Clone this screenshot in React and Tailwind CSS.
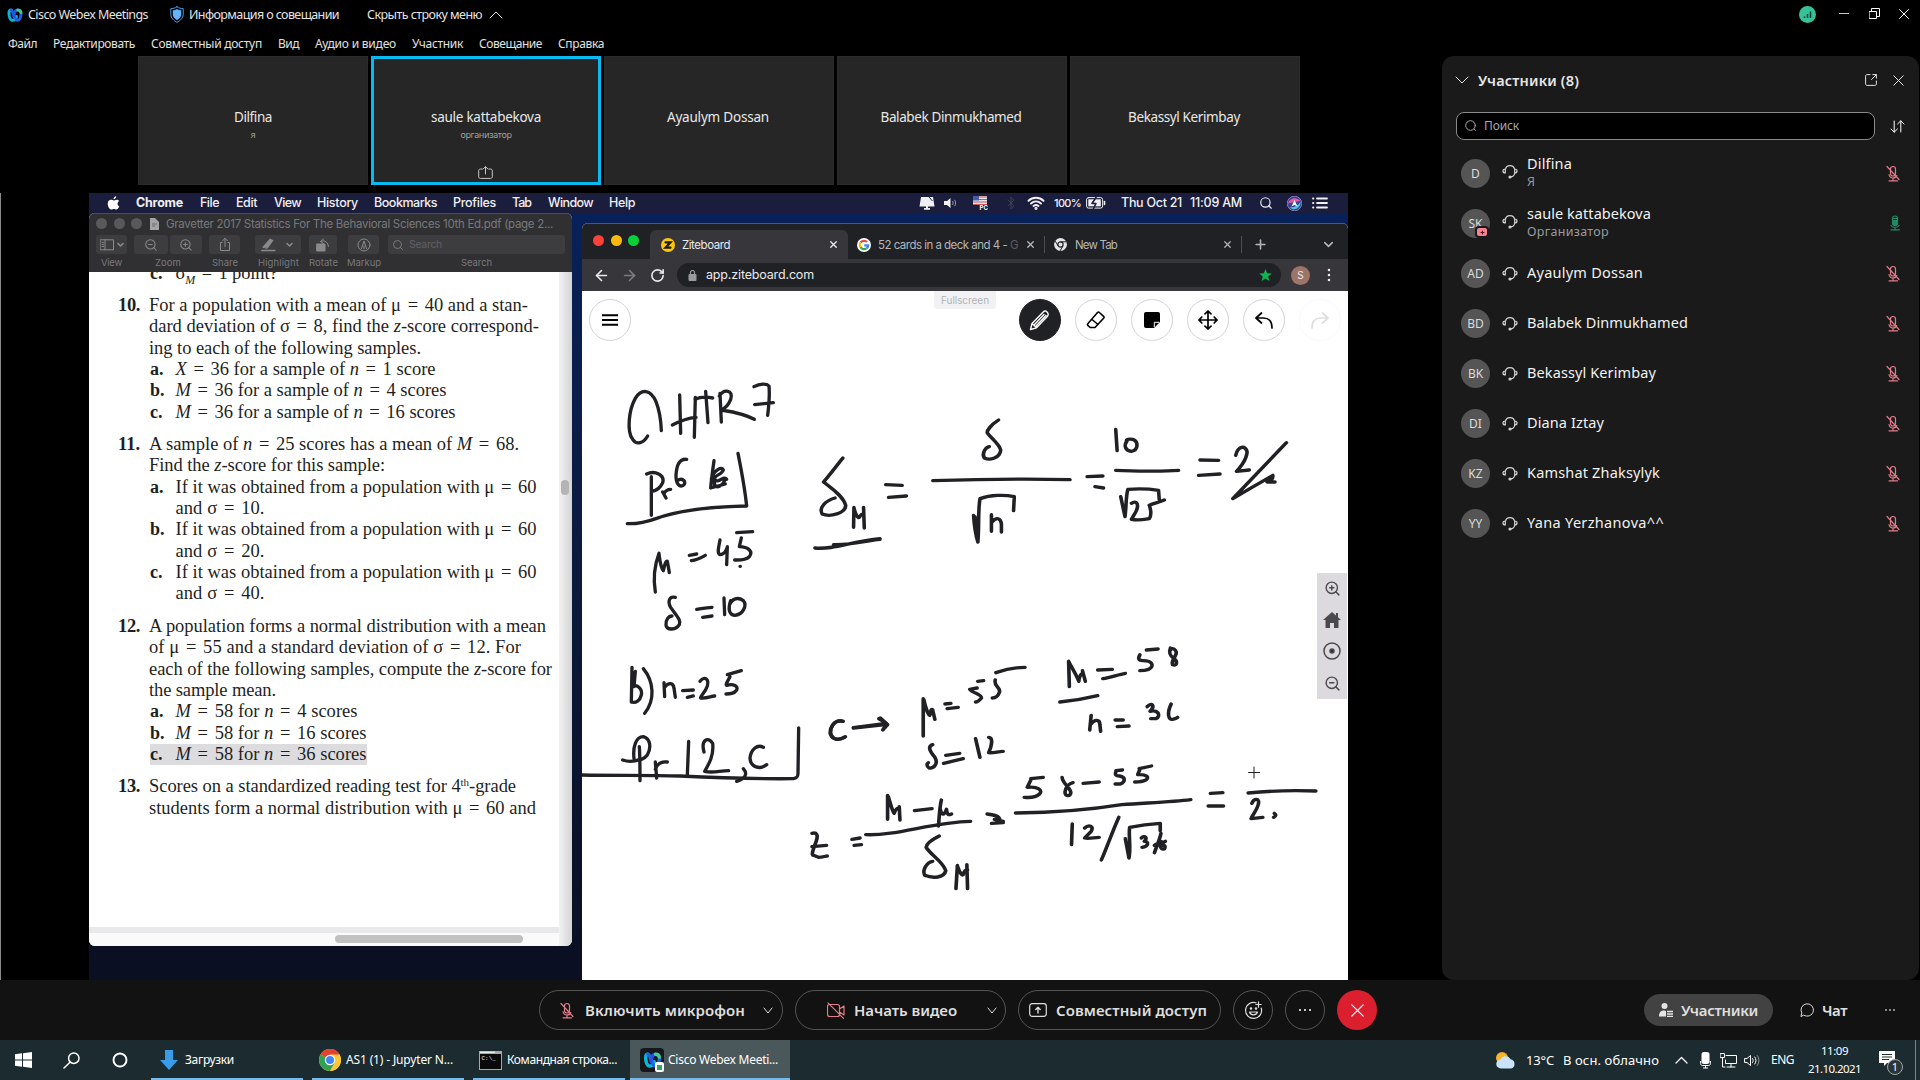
import React, { useLayoutEffect, useRef, useState } from "react";
import { ArrowLeft, ArrowRight, Bluetooth, ChevronDown, Plus, RotateCw, Search, X, ZoomIn, ZoomOut } from "lucide-react";

/* Text that spreads or tightens its letters to fill a given width. */
function T({ w, className = "", children }) {
  const ref = useRef(null);
  const [ls, setLs] = useState(0);
  useLayoutEffect(() => {
    const el = ref.current;
    const n = el.textContent.length;
    setLs((w - el.getBoundingClientRect().width) / n);
  }, []);
  return (
    <span className={"inline-block shrink-0 whitespace-nowrap " + className} style={{ width: w }}>
      <span ref={ref} style={{ letterSpacing: ls }}>{children}</span>
    </span>
  );
}

const Svg = ({ w, h, vb, className = "", children, sw = 1 }) => (
  <svg width={w} height={h} viewBox={vb || `0 0 ${w} ${h}`} className={"shrink-0 " + className} fill="none" stroke="currentColor" strokeWidth={sw} strokeLinecap="round" strokeLinejoin="round">
    {children}
  </svg>
);

const WebexLogo = ({ w = 16, h = 14 }) => (
  <Svg w={w} h={h} vb="0 0 16 14" sw={3}>
    <path d="M9.5 8.5C9 11 7.500 12.300 5.500 12.300C3 12.300 2 8 2 5C2 3 2.700 2 4 2" stroke="#0bb5d8" />
    <path d="M4 2C6.500 2 7 12.200 10.300 12.200C13 12.200 14 8 14 5.500" stroke="#1f62e8" />
    <path d="M6.800 8C7.200 4.500 8.500 1.900 10.700 1.900" stroke="#2752e4" />
    <path d="M10.700 1.900C12.500 1.900 13.700 2.600 14 4.500" stroke="#3fcf8f" />
  </Svg>
);

const MicOff = ({ className = "" }) => (
  <Svg w={14} h={17} className={className} sw={1.2}>
    <path d="M4.500 4a2.500 2.500 0 0 1 5 0v4.500a2.500 2.500 0 0 1-5 0zM7 13v2.800M3 15.800h8.500M3 9.500C3.400 11.700 5 13 7 13s3.200-.9 3.800-2.500M1 1.500l12 13" />
  </Svg>
);
const MicOn = () => (
  <Svg w={12} h={16} className="text-[#1f8a63]" sw={1.2}>
    <rect x="3.500" y="1" width="5" height="9.500" rx="2.500" />
    <path d="M4 5.500h4v3a2 2 0 0 1-4 0z" fill="#1f8a63" />
    <path d="M2 10.500c.8 1.300 2.200 1.800 4 1.800s3.200-.5 4-1.800M6 12.300v2.400M2 14.800h8.500M4 3.500h4" />
  </Svg>
);
const Headset = () => (
  <Svg w={16} h={16} sw={1.200} className="text-[#d6d6d6]">
    <path d="M3.300 6.500a4.800 4.800 0 0 1 9.400 0M3.300 6C1.600 6 1 7 1 8s.6 2 2.300 2zM12.700 6C14.400 6 15 7 15 8s-.6 2-2.300 2zM12.700 10c-.3 2-1.700 3.700-3.900 3.900" />
    <circle cx="8" cy="14" r="1" fill="currentColor" />
  </Svg>
);

function TitleBar() {
  return (
    <div className="flex h-[29px] items-center pl-[7px] text-[12.5px] leading-4 text-[#e4e4e4]">
      <WebexLogo />
      <T w={120} className="ml-[5px]">Cisco Webex Meetings</T>
      <Svg w={14} h={17} className="ml-[22px] text-[#4d9df0]">
        <path d="M7 .8c2 1.500 4 1.800 6.200 1.800v6c0 3.500-3 6-6.200 7.800C3.800 14.600.8 12.100.8 8.600v-6C3 2.600 5 2.300 7 .8z" />
        <path d="M7 3c1.300.9 2.700 1.200 4.200 1.300v4.500c0 2.300-2 4-4.200 5.400-2.200-1.400-4.200-3.100-4.200-5.400V4.300C4.300 4.200 5.700 3.900 7 3z" fill="#64b4fa" stroke="none" />
      </Svg>
      <T w={150} className="ml-[5px]">Информация о совещании</T>
      <T w={115} className="ml-[28px]">Скрыть строку меню</T>
      <Svg w={14} h={8} className="ml-[7px]"><path d="M1 7l6-6 6 6" /></Svg>
      <div className="ml-auto flex items-center pr-[11px]">
        <Svg w={17} h={17}>
          <circle cx="8.500" cy="8.500" r="8.500" fill="#36c296" stroke="none" />
          <path d="M5.500 12v-1.500M8.500 12V8M11.500 12V5.500" stroke="#12392d" strokeWidth="1.500" strokeLinecap="butt" />
        </Svg>
        <div className="-mt-[2px] ml-[23px] h-px w-[10px] bg-[#c8c8c8]" />
        <Svg w={11} h={11} className="-mt-[2px] ml-[20px]" ><path d="M.5 3.500h7v7h-7zM2.500 3.500v-3h8v8h-3" stroke="#fff" strokeLinejoin="miter" /></Svg>
        <Svg w={10} h={10} className="-mt-[2px] ml-[19px]"><path d="M.5.5l9 9M9.500.5l-9 9" stroke="#fff" /></Svg>
      </div>
    </div>
  );
}

const MENU = [["Файл", 29], ["Редактировать", 82], ["Совместный доступ", 111], ["Вид", 21], ["Аудио и видео", 81], ["Участник", 51], ["Совещание", 63], ["Справка", 46]];

const TILES = [
  ["Dilfina", 38, "я", 5],
  ["saule kattabekova", 110, "организатор", 51],
  ["Ayaulym Dossan", 102],
  ["Balabek Dinmukhamed", 141],
  ["Bekassyl Kerimbay", 112],
];

function Tiles() {
  return (
    <div className="ml-[138px] flex gap-[3px]">
      {TILES.map(([name, w, sub, sw], i) => (
        <div key={name} className={"relative flex h-[129px] w-[230px] flex-col items-center bg-[#262626] " + (i === 0 ? "border border-[#2b2b2b] pt-[52px]" : i === 1 ? "border-[3px] border-[#07bbf2] pt-[50px]" : "border border-[#2b2b2b] pr-[2px] pt-[52px]")}>
          <T w={w} className="text-[13.5px] leading-4 text-[#e8e8e8]">{name}</T>
          {sub && <T w={sw} className="mt-[4px] text-[9px] leading-3 text-[#a0a0a0]">{sub}</T>}
          {i === 1 && (
            <Svg w={15} h={13} className="mr-[2px] mt-[25px] text-[#c8c8c8]">
              <path d="M4 3H2.500C1.500 3 .7 3.600.7 4.500v6.300c0 1 .8 1.600 1.800 1.600h10c1 0 1.800-.6 1.800-1.600V4.500c0-.9-.8-1.500-1.800-1.500H11M7.500 8V.8M5 3L7.500.7 10 3" />
            </Svg>
          )}
        </div>
      ))}
    </div>
  );
}

const MAC_MENU = [["File", 19, "ml-[17px]"], ["Edit", 21, "ml-[17px]"], ["View", 27, "ml-[17px]"], ["History", 41, "ml-[16px]"], ["Bookmarks", 63, "ml-[16px]"], ["Profiles", 43, "ml-[16px]"], ["Tab", 19, "ml-[16px]"], ["Window", 45, "ml-[17px]"], ["Help", 26, "ml-[16px]"]];

function MacMenuBar() {
  return (
    <div className="flex h-[20px] items-center bg-[#1b1d3c] pl-[18px] font-['Inter'] text-[12.5px] font-medium leading-4 text-[#f0f0f4]">
      <svg width="13" height="14" viewBox="0 0 13 14" className="-mt-px shrink-0" fill="#fff">
        <path d="M9.200.2c.1 1.600-1.200 2.900-2.700 3C6.400 1.700 7.700.4 9.200.2zM12.300 10.300c-.6 1.600-1.700 3.300-3 3.300-.9 0-1.300-.5-2.400-.5s-1.500.5-2.300.5C2.600 13.700.7 10.500.7 7.800c0-2.600 1.700-4 3.300-4 1.100 0 1.900.7 2.700.7.700 0 1.700-.8 3-.8 1 0 1.900.5 2.500 1.300-2.300 1.400-2 4.500.1 5.300z" />
      </svg>
      <T w={47} className="ml-[16px] font-bold">Chrome</T>
      {MAC_MENU.map(([t, w, m]) => <T key={t} w={w} className={m}>{t}</T>)}
      <div className="ml-auto flex items-center pr-[20px]">
        <svg width="16" height="14" viewBox="0 0 16 14" fill="#f0f0f4"><path d="M2 1h12l1.500 9.500H.5zM5 12h2v-1.500h2V12h2v1.700H5z" /><path d="M10 1l3.500 4" stroke="#1b1d3c" /></svg>
        <svg width="13" height="12" viewBox="0 0 13 12" className="ml-[9px]" fill="#f0f0f4"><path d="M0 4h3l3.500-3v10L3 8H0z" /><path d="M8.500 4c.8 1 .8 3 0 4M10.500 2.800c1.500 2 1.500 4.400 0 6.400" fill="none" stroke="#9a9ab0" /></svg>
        <svg width="15" height="14" viewBox="0 0 15 14" className="ml-[16px]">
          <rect width="14" height="9" fill="#e9e4e8" /><path d="M0 1h14M0 3.500h14M0 6h14M0 8.500h14" stroke="#c65662" strokeWidth="1.200" /><rect width="6" height="4.500" fill="#4a5aa5" />
          <text x="6.500" y="13.500" fontSize="6" fontWeight="700" fill="#fff">PC</text>
        </svg>
        <Bluetooth size={14} strokeWidth={1.500} className="ml-[16px] text-[#44465f]" />
        <Svg w={18} h={14} className="ml-[9px]" sw={2}><path d="M1.500 4.800c4.200-4 10.800-4 15 0M4 7.500c2.900-2.600 7.100-2.600 10 0M6.500 10c1.500-1.200 3.500-1.200 5 0" /><circle cx="9" cy="12.300" r=".6" fill="#fff" /></Svg>
        <T w={27} className="ml-[9px] text-[11px]">100%</T>
        <Svg w={20} h={12} className="ml-[5px]"><rect x=".6" y=".6" width="16" height="10.500" rx="2" /><rect x="2.300" y="2.300" width="12.500" height="7" fill="currentColor" stroke="none" /><path d="M18.500 4.500v3" strokeWidth="1.600" /><path d="M10 .5L6 6.500h4l-2.500 5" stroke="#1b1d3c" strokeWidth="1.600" /></Svg>
        <T w={61} className="ml-[15px]">Thu Oct 21</T>
        <T w={52} className="ml-[8px]">11:09 AM</T>
        <Search size={14} className="ml-[17px]" />
        <svg width="15" height="15" viewBox="0 0 15 15" className="ml-[14px]">
          <circle cx="7.500" cy="7.500" r="7.300" fill="#3b3f9c" stroke="#c9a9d0" strokeWidth=".6" />
          <path d="M1 8C2 2 9 0 13.500 5 10 6 4 6 1 8z" fill="#e05a9c" /><path d="M2.500 11c4 1 8-1 11-5C14 12 7 16 2.500 11z" fill="#46c6d8" /><path d="M7.500 4l3 6.500-3-1.500-3 1.500z" fill="#f0fafd" />
        </svg>
        <Svg w={16} h={12} className="ml-[10px]" sw={1.800}><path d="M5 1.500h10M5 6h10M5 10.500h10" /><path d="M1 1.500h.4M1 6h.4M1 10.500h.4" /></Svg>
      </div>
    </div>
  );
}

const TBtn = ({ w, m = "", children }) => (
  <div className={"flex h-[19px] shrink-0 items-center justify-center rounded-[3px] bg-[#3d3d40] text-[#8a8a8d] " + m} style={{ width: w }}>{children}</div>
);

const Num = ({ n, top = "", children }) => (
  <div className={"flex " + top}>
    <T w={22} className="mr-[9px] font-bold">{n}</T>
    <div className="flex flex-col">{children}</div>
  </div>
);
const Sub = ({ l, w, hl, children }) => (
  <div className="flex pl-px">
    <div className={"flex h-[21.35px] " + (hl ? "bg-[#dcdcde]" : "")}>
      <b className="w-[25.500px] shrink-0 text-[18px]">{l}</b>
      <T w={w}>{children}</T>
    </div>
  </div>
);
/* Equals sign with the wide side spaces of the typeset book. */
const E = () => <span className="mx-[2px]">{" = "}</span>;

function PdfWindow() {
  return (
    <div className="flex h-[733px] w-[483px] shrink-0 flex-col overflow-hidden rounded-[6px] bg-white">
      <div className="flex h-[59px] shrink-0 flex-col border-t border-[#4b4d54] bg-[#303033] font-['Inter'] text-[#78787b]">
        <div className="flex h-[19px] items-center pl-[7px]">
          <i className="h-[11px] w-[11px] rounded-full bg-[#59595c]" />
          <i className="ml-[7px] h-[11px] w-[11px] rounded-full bg-[#59595c]" />
          <i className="ml-[6px] h-[11px] w-[11px] rounded-full bg-[#59595c]" />
          <svg width="9" height="12" viewBox="0 0 9 12" className="ml-[8px]"><path d="M0 0h5l4 4v8H0z" fill="#a4a4a6" /><path d="M2 6h5M2 8h3" stroke="#6c6c6e" /></svg>
          <T w={387} className="ml-[7px] text-[11.5px] leading-4">Gravetter 2017 Statistics For The Behavioral Sciences 10th Ed.pdf (page 2...</T>
        </div>
        <div className="mt-[2px] flex items-center pl-[7px]">
          <TBtn w={31}><Svg w={24} h={12}><rect x=".5" y=".8" width="13" height="10" /><path d="M5 .8v10M2 3.500h1.500M2 5.500h1.500M2 7.500h1.500" /><path d="M18 4.500l2.500 2.500L23 4.500" strokeWidth="1.600" /></Svg></TBtn>
          <TBtn w={34} m="ml-[7px]"><ZoomOut size={14} strokeWidth={1.800} /></TBtn>
          <TBtn w={32} m="ml-[2px]"><ZoomIn size={14} strokeWidth={1.800} /></TBtn>
          <TBtn w={31} m="ml-[7px]"><Svg w={12} h={15}><path d="M3 5.500H1.500v8h9v-8H9M6 9.500v-8M3.500 3.800L6 1.300l2.500 2.500" /></Svg></TBtn>
          <TBtn w={46} m="ml-[15px]"><Svg w={34} h={14}><path d="M2 9L9 1l3 1.500-5.500 7.500z" fill="currentColor" /><path d="M.8 12.500h13M26 5.500L28.500 8 31 5.500" strokeWidth="1.600" /></Svg></TBtn>
          <TBtn w={28} m="ml-[8px]"><Svg w={14} h={14}><rect x="1" y="6" width="8" height="7" fill="currentColor" /><path d="M5 3.500c4-2 7 1 7.500 5M7.500 1L4.500 3.500 7.500 5.500" /></Svg></TBtn>
          <TBtn w={31} m="ml-[11px]"><Svg w={14} h={14}><circle cx="7" cy="7" r="6" /><path d="M4.500 10.500L7 3l2.500 7.500M7 8v3" /></Svg></TBtn>
          <div className="ml-[9px] flex h-[19px] w-[177px] items-center rounded-[3px] bg-[#3d3d40] pl-[4px]"><Search size={12} /><T w={33} className="ml-[5px] text-[10.500px] text-[#606063]">Search</T></div>
        </div>
        <div className="flex pl-[12px] pt-[2px] text-[9.500px] leading-[14px]">
          <T w={21}>View</T><T w={26} className="ml-[33px]">Zoom</T><T w={26} className="ml-[31px]">Share</T><T w={41} className="ml-[20px]">Highlight</T><T w={29} className="ml-[10px]">Rotate</T><T w={34} className="ml-[9px]">Markup</T><T w={31} className="ml-[80px]">Search</T>
        </div>
      </div>
      <div className="flex min-h-0 flex-1">
        <div className="flex w-[470px] shrink-0 flex-col overflow-hidden">
          <div className="h-[655px] overflow-hidden pl-[29px] font-['Liberation_Serif'] text-[18.500px] leading-[21.350px] text-[#1f1f22]">
            <div className="-mt-[9px] h-[32px] pl-[31px]"><Sub l="c." w={102}>σ<span className="relative top-[5px] text-[12px] italic">M</span><E />1 point?</Sub></div>
            <Num n="10.">
              <T w={379}>For a population with a mean of μ<E />40 and a stan-</T>
              <T w={390}>dard deviation of σ<E />8, find the <i>z</i>-score correspond-</T>
              <T w={272}>ing to each of the following samples.</T>
              <Sub l="a." w={260}><i>X</i><E />36 for a sample of <i>n</i><E />1 score</Sub>
              <Sub l="b." w={271}><i>M</i><E />36 for a sample of <i>n</i><E />4 scores</Sub>
              <Sub l="c." w={280}><i>M</i><E />36 for a sample of <i>n</i><E />16 scores</Sub>
            </Num>
            <Num n="11." top="mt-[11px]">
              <T w={370}>A sample of <i>n</i><E />25 scores has a mean of <i>M</i><E />68.</T>
              <T w={236}>Find the <i>z</i>-score for this sample:</T>
              <Sub l="a." w={361}>If it was obtained from a population with μ<E />60</Sub>
              <Sub l="" w={89}>and σ<E />10.</Sub>
              <Sub l="b." w={361}>If it was obtained from a population with μ<E />60</Sub>
              <Sub l="" w={89}>and σ<E />20.</Sub>
              <Sub l="c." w={361}>If it was obtained from a population with μ<E />60</Sub>
              <Sub l="" w={89}>and σ<E />40.</Sub>
            </Num>
            <Num n="12." top="mt-[11px]">
              <T w={397}>A population forms a normal distribution with a mean</T>
              <T w={372}>of μ<E />55 and a standard deviation of σ<E />12. For</T>
              <T w={403}>each of the following samples, compute the <i>z</i>-score for</T>
              <T w={127}>the sample mean.</T>
              <Sub l="a." w={182}><i>M</i><E />58 for <i>n</i><E />4 scores</Sub>
              <Sub l="b." w={191}><i>M</i><E />58 for <i>n</i><E />16 scores</Sub>
              <Sub l="c." w={191} hl><i>M</i><E />58 for <i>n</i><E />36 scores</Sub>
            </Num>
            <Num n="13." top="mt-[11px]">
              <T w={367} className="h-[21.35px]">Scores on a standardized reading test for 4<span className="relative -top-[6px] text-[11px]">th</span>-grade</T>
              <T w={387}>students form a normal distribution with μ<E />60 and</T>
            </Num>
          </div>
          <div className="h-[6px] shrink-0 bg-[#e9e9eb]" />
          <div className="flex-1 bg-[#fafafa] pl-[246px] pt-[2px]"><div className="h-[8px] w-[188px] rounded-full bg-[#c1c1c1]" /></div>
        </div>
        <div className="flex-1 bg-linear-to-r from-[#f2f2f3] to-[#d4d4d6] pl-[2px] pt-[208px]"><div className="h-[15px] w-[8px] rounded-full bg-[#b4b4b6]" /></div>
      </div>
    </div>
  );
}

const Round = ({ m = "", className = "border-[#d3d4d6] bg-white text-black", children }) => (
  <div className={"flex h-[42px] w-[42px] shrink-0 items-center justify-center rounded-full border " + className + " " + m}>{children}</div>
);

/* Pen strokes, grouped by the patch of the board they were drawn on. */
const INK_LEFT = [
  "M203 228C190 250 170 256 158 238C140 215 146 150 166 115C184 85 212 88 228 125C240 155 243 185 244 212",
  "M299 105L302 220M346 112L343 232M277 195C300 183 325 174 348 172M345 118C362 110 380 110 398 114M377 94L384 188",
  "M420 100L424 186M418 108C432 85 462 90 452 118C446 134 432 146 424 150C455 155 490 160 523 178",
  "M522 80C540 70 560 70 567 78C570 110 566 140 563 166M524 134L580 128",
  "M474 280C484 330 494 380 500 438C400 440 300 450 230 475C200 486 170 492 142 491",
  "M214 350L214 466M200 342C225 330 255 345 248 368C240 385 228 392 216 394M248 396L258 414M252 400C258 390 264 388 272 388",
  "M320 298C298 296 290 315 288 345C287 372 300 385 312 374C320 364 306 352 292 362",
  "M402 302C398 330 394 360 392 384L436 372M394 356C402 330 426 318 430 330C424 346 404 344 404 356C410 376 432 344 440 358M400 340L404 376C412 386 428 376 434 362",
  "M237 580C222 620 220 660 226 696M237 582C240 606 246 628 250 632C254 612 258 602 262 604L268 638",
  "M328 586L350 582M334 602C350 600 362 594 376 586M420 540C414 570 412 580 420 584C430 584 438 574 442 562M442 560L440 614M470 518L518 515M484 534L478 560C505 560 520 575 508 590C495 602 480 600 464 600M480 619L481 619",
  "M286 712C268 708 262 724 272 742C290 768 304 780 298 794C288 810 262 812 258 796C256 780 266 768 276 768M350 748C366 744 380 744 396 742M368 772L396 768M432 714L434 764M452 722C444 745 446 764 464 766C490 764 502 735 490 722C474 710 456 716 450 732",
  "M156 922L154 1026M156 982C170 970 188 985 184 1005C180 1022 168 1030 154 1026M166 934L162 980M190 926C222 965 226 1020 194 1060",
  "M252 968L254 1010M254 982C266 966 280 968 282 985L286 1012M308 992L340 990M322 1012L340 1008M360 964C372 948 388 955 382 978C376 998 360 1008 362 1014C378 1016 390 1010 404 1008M442 944C456 940 470 936 484 932M450 950C442 965 436 974 440 976C460 970 476 978 470 990C462 1002 450 1002 438 1002",
  "M178 1160C180 1190 180 1230 180 1262M128 1200C145 1206 165 1204 180 1198M162 1196C158 1160 168 1130 190 1130C212 1136 214 1165 202 1185C194 1196 184 1198 178 1202",
  "M226 1206L230 1254M226 1228C232 1210 246 1204 262 1206M326 1144L322 1246M372 1176C362 1140 384 1128 398 1150C402 1185 388 1210 374 1234C398 1240 420 1232 446 1232M490 1226C504 1242 496 1256 470 1264M550 1162C532 1152 512 1168 510 1195C512 1222 540 1230 560 1214",
  "M6 1245C120 1247 200 1245 300 1248C420 1254 540 1257 640 1256C652 1254 654 1250 654 1240L656 1104",
  "M790 1084C770 1076 752 1095 752 1118C756 1140 776 1142 794 1132M820 1104L916 1094M896 1076C908 1082 920 1090 922 1094C916 1100 910 1104 908 1110",
];
const INK_TOP = [
  "M176 174C160 196 134 232 122 246C140 262 176 286 184 316C184 340 140 352 118 342C108 322 128 302 154 294",
  "M207 322L206 382M207 324C212 345 218 356 222 352C226 344 230 342 235 342M234 322L236 384M98 444C150 450 200 424 280 416M150 434C200 436 240 422 280 418M170 436L250 421",
  "M296 254L342 256M304 292L354 288M428 242C550 238 690 236 812 239",
  "M612 60C592 74 580 90 580 98C590 114 614 132 618 150C616 174 588 182 572 174C564 160 576 142 586 140",
  "M542 346C544 380 548 405 554 426M554 426C558 380 554 330 560 296C590 284 630 284 656 290L654 332M592 344L592 394M594 366C606 350 618 354 620 372L620 396M546 350L552 410",
  "M860 230L904 228M882 260L906 264M940 88L944 152M972 122C962 136 966 152 984 154C1004 150 1004 124 988 118C976 116 970 118 970 122M940 211C1000 213 1060 216 1116 211",
  "M954 290L966 350M966 350C970 320 968 290 974 268C1000 266 1030 266 1060 271L1062 300M984 310C1000 298 1006 316 996 336L984 358C1005 362 1022 358 1034 356C1040 346 1038 328 1034 316M1034 316C1048 310 1064 306 1076 300",
  "M1176 180L1228 181M1172 226L1232 222M1276 166C1282 138 1304 134 1308 156C1306 182 1284 208 1278 214L1314 210",
  "M1418 128L1268 296C1310 270 1350 244 1380 226C1382 236 1370 248 1364 246L1386 246M1374 234L1366 246",
];
const INK_BOTTOM = [
  "M172 304C150 298 138 320 138 340C144 362 164 362 180 350M202 323L286 311M276 294L296 314L284 328",
  "M394 236L394 348M396 240C400 262 408 285 412 286C414 268 418 266 420 270L426 298M454 252L470 250M460 266L490 262M542 204L522 208C530 220 556 222 554 234C548 242 542 246 538 246M544 184L560 182M592 180C588 200 606 200 604 216C600 228 594 234 584 234M594 158C620 148 646 142 674 142",
  "M420 374C404 380 414 396 426 412C436 430 424 446 410 444C402 438 404 430 408 428M456 406L494 400M450 430L504 416M538 356L550 412M574 352C586 352 584 374 574 398C588 400 600 394 614 394",
  "M794 124L796 200M794 124C804 146 816 166 822 184C824 166 828 160 834 160M832 152L840 184M770 246C810 242 840 236 874 227M874 150L914 148M888 176C910 172 930 164 950 160M1008 90L1040 87M990 104C984 116 986 122 998 122C1026 122 1030 138 1014 148C1004 152 996 152 990 152M1074 84C1068 100 1074 108 1084 116C1096 126 1090 140 1080 134C1074 122 1092 108 1090 96C1086 84 1078 84 1074 90",
  "M856 286L852 330M854 314C866 296 880 298 880 314L882 334M922 300L944 300M928 320L960 318M1010 260C1022 246 1034 256 1018 274C1040 268 1050 288 1034 296L1020 296M1076 252C1064 280 1068 300 1080 298C1090 296 1094 292 1094 292",
  "M88 640C100 636 106 644 100 662C94 682 84 706 92 706L106 712C118 712 124 708 130 708M88 680L128 676M198 658L220 654M204 676L224 674",
  "M296 526L296 598M298 530C304 552 310 576 314 580C318 568 322 564 326 566M328 560L330 600M370 572L418 566M436 618C438 585 440 555 444 540M440 564C444 588 452 588 458 568C460 586 464 586 472 582",
  "M236 644C320 648 420 606 524 604",
  "M438 648C416 660 402 672 402 682C414 704 448 724 456 752C452 774 420 776 398 766C390 748 406 726 420 724M488 736L484 806M488 738C494 756 500 768 504 764C506 752 510 750 516 750M514 734L516 806",
  "M570 582C586 584 600 586 604 596M582 610L614 608M590 598L614 604M648 579C760 578 860 568 940 554C1020 548 1080 546 1130 539",
  "M690 476L724 472M690 480L680 502C710 498 724 512 714 522C704 532 690 534 672 532M776 472C778 492 800 504 800 518C798 530 784 530 784 516C786 500 796 490 806 488M834 490L878 486M924 452L942 450M926 452C920 462 922 468 934 468C952 472 950 486 936 492L922 492M988 446L1022 438M990 448L984 464C1008 462 1018 472 1006 480C996 486 986 486 976 486",
  "M804 612L802 674M838 624C850 612 864 618 856 634L838 654C850 658 864 652 878 652M932 592C916 630 900 680 884 720M950 656L960 714C966 680 958 645 962 622C990 616 1020 612 1046 610L1046 632M994 654C1004 644 1012 654 1002 664C1016 664 1014 680 996 682M1048 640C1044 660 1036 680 1030 698M1030 676C1044 664 1052 670 1060 664M1048 664C1044 686 1050 690 1058 686C1062 676 1054 672 1048 678",
  "M1184 520L1218 518M1178 558L1220 558M1288 519C1350 512 1420 511 1474 513M1298 550C1304 534 1320 534 1316 552C1312 572 1298 586 1296 596L1328 592M1360 580C1366 584 1364 588 1358 592",
];

function Board() {
  return (
    <svg width="766" height="689" viewBox="582 291 766 689" fill="none" stroke="#202124" strokeWidth="10" strokeLinecap="round" strokeLinejoin="round">
      <g transform="translate(580 360) scale(.33333)">{INK_LEFT.map((d) => <path key={d} d={d} />)}</g>
      <g transform="translate(780 400) scale(.35714 .33333)">{INK_TOP.map((d) => <path key={d} d={d} />)}</g>
      <g transform="translate(780 620) scale(.36352 .33333)">{INK_BOTTOM.map((d) => <path key={d} d={d} />)}</g>
      <path d="M1248.500 772.500h11M1254 767v11" strokeWidth="1" />
    </svg>
  );
}

function ChromeWindow() {
  return (
    <div className="mt-[10px] flex h-[757px] w-[766px] shrink-0 flex-col overflow-hidden rounded-t-[6px] bg-white font-['Inter']">
      <div className="flex h-[36px] shrink-0 items-end border-t border-[#55565a] bg-[#202124] pl-[11px] text-[11.500px] leading-4 text-[#b4b6ba]">
        <div className="-mb-px flex h-[38px] w-[57px] items-center gap-[6.500px] pb-px">
          <i className="h-[11px] w-[11px] rounded-full bg-[#fc4138]" /><i className="h-[11px] w-[11px] rounded-full bg-[#fdb90b]" /><i className="h-[11px] w-[11px] rounded-full bg-[#0ad03c]" />
        </div>
        <div className="flex h-[29px] w-[198px] items-center rounded-t-[6px] bg-[#37373b] pl-[11px] text-[#e8eaed]">
          <Svg w={14} h={14}><circle cx="7" cy="7" r="7" fill="#fcc60a" stroke="none" /><path d="M4.500 4.300h5l-5 5.400h5" stroke="#1a1a10" strokeWidth="2.200" strokeLinejoin="miter" /></Svg>
          <T w={48} className="ml-[7px]">Ziteboard</T>
          <X size={11} strokeWidth={3} className="ml-auto mr-[9px]" />
        </div>
        <div className="flex h-[29px] flex-1 items-center pl-[9px]">
          <svg width="14" height="14" viewBox="0 0 14 14" fill="none" strokeWidth="2.200"><circle cx="7" cy="7" r="7" fill="#fff" /><path d="M3.600 4.500A4.200 4.200 0 0 1 10 4" stroke="#ea4335" /><path d="M3.500 9.300a4.200 4.200 0 0 1 0-4.600" stroke="#fbbc05" /><path d="M3.500 9.200A4.200 4.200 0 0 0 9.500 10.400" stroke="#34a853" /><path d="M9.500 10.400C10.800 9.500 11.200 8.500 11.200 7.300H7.200" stroke="#4285f4" /></svg>
          <T w={140} className="ml-[7px]">52 cards in a deck and 4 - <span className="text-[#5b5c60]">G</span></T>
          <X size={11} strokeWidth={3} className="ml-[7px]" />
          <i className="ml-[8px] h-[17px] w-px bg-[#4c4d51]" />
          <svg width="13" height="13" viewBox="0 0 13 13" className="ml-[9px]"><circle cx="6.500" cy="6.500" r="6.400" fill="#e4e5e8" /><circle cx="6.500" cy="6.500" r="2.600" fill="#e4e5e8" stroke="#202124" strokeWidth="1.200" /><path d="M6.500 3.800h5.800M4.200 8L1.300 3.200M8.900 8l-2.900 5" stroke="#202124" /></svg>
          <T w={42} className="ml-[8px]">New Tab</T>
          <X size={11} strokeWidth={2.600} className="ml-[105px]" />
          <i className="ml-[8px] h-[17px] w-px bg-[#4c4d51]" />
          <Plus size={15} strokeWidth={2.500} className="ml-[11px]" />
          <ChevronDown size={15} strokeWidth={2.500} className="ml-auto mr-[12px]" />
        </div>
      </div>
      <div className="flex h-[32px] shrink-0 items-center bg-[#37373b] pl-[11px] text-[#e8eaed]">
        <ArrowLeft size={17} strokeWidth={2.300} />
        <ArrowRight size={17} strokeWidth={2.300} className="ml-[11px] text-[#7d7d81]" />
        <RotateCw size={15} strokeWidth={2.600} className="ml-[12px]" />
        <div className="ml-[12px] flex h-[24px] w-[604px] items-center rounded-full bg-[#202124] pl-[11px]">
          <svg width="9" height="11" viewBox="0 0 9 11"><rect x=".5" y="4" width="8" height="7" rx="1" fill="#9a9ba0" /><path d="M2.500 4V2.500a2 2 0 0 1 4 0V4" fill="none" stroke="#9a9ba0" strokeWidth="1.200" /></svg>
          <T w={108} className="ml-[9px] text-[12.500px] leading-4">app.ziteboard.com</T>
          <svg width="13" height="12" viewBox="0 0 24 23" className="ml-auto mr-[9px]" fill="#10b455"><path d="M12 0l3.200 8.200 8.800.5-6.800 5.500L19.500 23 12 18l-7.500 5 2.300-8.800L0 8.700l8.800-.5z" /></svg>
        </div>
        <div className="ml-[10px] flex h-[19px] w-[19px] items-center justify-center rounded-full bg-[#9f7468] text-[10px]">S</div>
        <Svg w={4} h={14} className="ml-[17px]"><path d="M2 2h.01M2 7h.01M2 12h.01" strokeWidth="2.600" /></Svg>
      </div>
      <div className="relative flex-1">
        <Board />
        <div className="absolute inset-x-0 top-0 flex">
          <Round m="ml-[7px] mt-[8px]"><Svg w={18} h={12} sw={2}><path d="M1 1.200h16M1 6h16M1 10.800h16" strokeLinecap="butt" /></Svg></Round>
          <div className="ml-[303px] flex h-[18px] w-[62px] items-center justify-center rounded-b bg-[#f2f2f4] text-[10px] text-[#b3b3b7]"><T w={48}>Fullscreen</T></div>
          <div className="ml-[23px] mt-[8px] flex gap-[14px]">
            <Round className="border-[#202124] bg-[#202124] text-white">
              <Svg w={22} h={22} sw={1.400}><path d="M1.500 20.500L3 14.500 14 3.200a3 3 0 0 1 4.300 4.200L7.500 18.800zM3 14.500l4.500 4.300M5.500 15.500L15 5.500M7 17L17 6.500" /></Svg>
            </Round>
            <Round><Svg w={20} h={18} sw={1.600}><path d="M2 12.500L11.500 1.500c.6-.6 1.300-.6 1.900 0l4.200 3.800c.6.600.6 1.200 0 1.900L9 16.500H4.200L1.800 14.300c-.5-.6-.4-1.200.2-1.800zM6 8.500l6 5" /></Svg></Round>
            <Round><Svg w={16} h={16}><path d="M2 0h12a2 2 0 0 1 2 2v8l-6 6H2a2 2 0 0 1-2-2V2a2 2 0 0 1 2-2z" fill="#000" stroke="none" /><path d="M10.300 14.800v-4.500h4.500" stroke="#fff" /></Svg></Round>
            <Round><Svg w={20} h={20} sw={1.700}><path d="M10 1v18M1 10h18M7 3.800L10 1l3 2.800M7 16.200l3 2.800 3-2.800M3.800 7L1 10l2.800 3M16.200 7l2.800 3-2.800 3" /></Svg></Round>
            <Round><Svg w={18} h={17} sw={1.700}><path d="M6.500 1L1 6l5.500 5M1 6h7.500c5 0 8.500 3 8.500 10" /></Svg></Round>
            <Round className="border-[#fafafa] text-[#dedee0]"><Svg w={18} h={17} sw={1.700}><path d="M11.500 1L17 6l-5.500 5M17 6H9.500C4.500 6 1 9 1 16" /></Svg></Round>
          </div>
        </div>
        <div className="absolute right-[1px] top-[282px] flex h-[126px] w-[30px] flex-col items-center justify-between bg-[#dcdade] py-[7px] text-[#4a4a4d]">
          <ZoomIn size={17} />
          <svg width="18" height="16" viewBox="0 0 18 16" fill="#4a4a4d"><path d="M9 0L0 8h2.500v8H7v-5h4v5h4.500V8H18l-3-2.700V1h-2v2.500z" /></svg>
          <Svg w={18} h={18} sw={1.500}><circle cx="9" cy="9" r="8" /><circle cx="9" cy="9" r="2" fill="#333" /></Svg>
          <ZoomOut size={17} />
        </div>
      </div>
    </div>
  );
}

const PEOPLE = [
  ["D", "Dilfina", 45, "Я", 7], ["SK", "saule kattabekova", 124, "Организатор", 82], ["AD", "Ayaulym Dossan", 116], ["BD", "Balabek Dinmukhamed", 161],
  ["BK", "Bekassyl Kerimbay", 129], ["DI", "Diana Iztay", 77], ["KZ", "Kamshat Zhaksylyk", 133], ["YY", "Yana Yerzhanova^^", 137],
];

function Participants() {
  return (
    <div className="mt-[-129px] ml-auto flex h-[924px] w-[477px] flex-col rounded-[12px] bg-[#1a1a1a]">
      <div className="flex h-[48px] items-center pl-[13px] text-[#e6e6e6]">
        <Svg w={14} h={8}><path d="M1 1l6 6 6-6" /></Svg>
        <T w={101} className="ml-[9px] text-[14.500px] font-semibold leading-5">Участники (8)</T>
        <Svg w={12} h={12} className="ml-auto"><path d="M5 .6H2.200C1.200.6.600 1.200.6 2.200v7.600c0 1 .6 1.600 1.600 1.600h7.600c1 0 1.600-.6 1.600-1.600V7M7.800.6h3.600v3.600M6.500 5.500L11.200.8" /></Svg>
        <Svg w={11} h={11} className="ml-[16px] mr-[15px]"><path d="M.8.8l9.400 9.400M10.200.8L.8 10.200" /></Svg>
      </div>
      <div className="ml-[14px] mt-[8px] flex items-center">
        <div className="flex h-[28px] w-[419px] items-center rounded-[8px] border border-[#8a8a8a] bg-black pl-[8px] text-[12px] text-[#a8a8a8]">
          <Svg w={12} h={12}><circle cx="5.500" cy="5.500" r="4.800" /><path d="M9 9l1.500 1.500" /></Svg>
          <T w={35} className="ml-[7px]">Поиск</T>
        </div>
        <Svg w={15} h={13} className="ml-[15px] text-white"><path d="M4.200 1v11M1 9l3.200 3.200L7.400 9M10.800 12V1M7.600 4l3.200-3.200L14 4" /></Svg>
      </div>
      <div className="mt-[8px] flex flex-col">
        {PEOPLE.map(([ini, name, w, sub, sw], i) => (
          <div key={name} className="flex h-[50px] items-center pl-[19px]">
            <div className="relative mt-px flex h-[29px] w-[29px] items-center justify-center rounded-full bg-[#555] text-[12px] text-[#dcdcdc]">
              {ini}
              {i === 1 && (
                <div className="absolute left-[14px] top-[17px] flex h-[12px] w-[14px] items-center justify-center rounded-[4px] border-2 border-[#1a1a1a] bg-[#fa8090]"><Plus size={5} strokeWidth={5} className="text-[#3a1a1e]" /></div>
              )}
            </div>
            <div className={"ml-[12px] " + (sub ? "-mt-[5px]" : "-mt-[1px]")}><Headset /></div>
            <div className={"ml-[9px] flex flex-col " + (sub ? "-mt-[2px]" : "-mt-[1px]")}>
              <T w={w} className="text-[14.500px] leading-[19px] text-[#f2f2f2]">{name}</T>
              {sub && <T w={sw} className="text-[12.500px] leading-[17px] text-[#9a9a9a]">{sub}</T>}
            </div>
            <div className="ml-auto flex w-[33px] justify-start">{i === 1 ? <div className="ml-[3px]"><MicOn /></div> : <MicOff className="text-[#e27c88]" />}</div>
          </div>
        ))}
      </div>
    </div>
  );
}

const Chev = ({ m = "" }) => <Svg w={10} h={7} className={m}><path d="M1 1l4 5 4-5" /></Svg>;

function Controls() {
  return (
    <div className="flex h-[60px] items-center bg-[#121212] text-[15px] font-semibold leading-5 text-[#dedede]">
      <div className="ml-[539px] flex h-[40px] w-[244px] items-center rounded-full border border-[#555] pl-[20px]">
        <MicOff className="text-[#e27c88]" /><T w={160} className="ml-[11px]">Включить микрофон</T><Chev m="ml-[18px]" />
      </div>
      <div className="ml-[12px] flex h-[40px] w-[211px] items-center rounded-full border border-[#555] pl-[31px]">
        <Svg w={18} h={17} className="text-[#e27c88]" sw={1.200}><path d="M2.500 2.500h8c1.200 0 2 .6 2 2v8c0 1.400-.8 2-2 2h-8c-1.200 0-2-.6-2-2v-8c0-1.400.8-2 2-2zM12.500 7l4.500-3v9l-4.500-3M1 .8l15.500 15.500" /></Svg>
        <T w={103} className="ml-[9px]">Начать видео</T><Chev m="ml-[30px]" />
      </div>
      <div className="ml-[12px] flex h-[40px] w-[203px] items-center rounded-full border border-[#555] pl-[10px]">
        <Svg w={18} h={14} sw={1.200}><rect x=".7" y=".7" width="16.600" height="12.600" rx="2.500" /><path d="M9 10V4.500M6.800 6.500L9 4.300l2.200 2.200" strokeWidth="1.400" /></Svg>
        <T w={151} className="ml-[9px]">Совместный доступ</T>
      </div>
      <div className="ml-[12px] flex h-[40px] w-[40px] items-center justify-center rounded-full border border-[#555]">
        <Svg w={19} h={19} sw={1.200}><path d="M12 1.800A8 8 0 1 0 17.200 7M14.500.8v5.400M11.800 3.500h5.400M5.500 11c.7 2 2 2.800 4 2.800s3.200-.8 4-2.800z" /><circle cx="7" cy="7.500" r=".7" fill="#ddd" /><circle cx="12" cy="7.500" r=".7" fill="#ddd" /></Svg>
      </div>
      <div className="ml-[12px] flex h-[40px] w-[40px] items-center justify-center gap-[3px] rounded-full border border-[#555]">
        <i className="h-[2px] w-[2px] bg-[#c8c8c8]" /><i className="h-[2px] w-[2px] bg-[#c8c8c8]" /><i className="h-[2px] w-[2px] bg-[#c8c8c8]" />
      </div>
      <div className="ml-[12px] flex h-[40px] w-[40px] items-center justify-center rounded-full bg-[#dc1f2e] text-white">
        <Svg w={13} h={13} sw={1.200}><path d="M.8.8l11.400 11.400M12.200.8L.8 12.200" /></Svg>
      </div>
      <div className="ml-auto flex h-[32px] w-[129px] items-center rounded-full bg-[#424242] pl-[15px]">
        <svg width="14" height="14" viewBox="0 0 14 14" fill="#e4e4e4"><circle cx="5.500" cy="3" r="3" /><path d="M0 13.500C0 9 2 7.500 5 7.500l2 .5v5.500z" /><path d="M8 8.500h6M8 11h6M8 13.400h6" stroke="#e4e4e4" strokeWidth="1.300" /></svg>
        <T w={77} className="ml-[8px]">Участники</T>
      </div>
      <Svg w={14} h={14} className="ml-[27px]"><path d="M1 13.200l.8-3.200A6.200 6.200 0 1 1 4 12.300z" /></Svg>
      <T w={25} className="ml-[8px]">Чат</T>
      <div className="ml-[38px] mr-[25px] flex gap-[2px]"><i className="h-[2px] w-[2px] bg-[#888]" /><i className="h-[2px] w-[2px] bg-[#888]" /><i className="h-[2px] w-[2px] bg-[#888]" /></div>
    </div>
  );
}

const Task = ({ m = "", w, active, pl, children }) => (
  <div className={"flex h-[40px] shrink-0 items-center border-b-2 border-[#76b9ed] pt-[2px] " + (active ? "bg-[#4a585c] " : "") + m} style={{ width: w, paddingLeft: pl }}>{children}</div>
);

function Taskbar() {
  return (
    <div className="flex h-[40px] items-center bg-[#1c2b2f] text-[12px] leading-4 text-white">
      <svg width="17" height="16" viewBox="0 0 17 16" className="ml-[15px]" fill="#fff"><path d="M0 2.300L7 1.300v6.200H0zM8 1.200L17 0v7.500H8zM0 8.500h7v6.200l-7-1zM8 8.500h9V16l-9-1.200z" /></svg>
      <Svg w={17} h={17} className="ml-[31px]" sw={1.500}><circle cx="10.800" cy="6.200" r="5.200" /><path d="M7 10.200L1 16" /></Svg>
      <Svg w={16} h={16} className="ml-[32px]" sw={2}><circle cx="8" cy="8" r="6.500" /></Svg>
      <Task m="ml-[23px]" w={152} pl={9}>
        <svg width="18" height="20" viewBox="0 0 18 20" fill="#3a9be8"><path d="M5 0h8v10h5l-9 10-9-10h5z" /></svg>
        <T w={49} className="ml-[7px]">Загрузки</T>
      </Task>
      <Task m="ml-[9px]" w={152} pl={7}>
        <svg width="22" height="22" viewBox="0 0 22 22"><circle cx="11" cy="11" r="11" fill="#fcc934" /><path d="M11 11L1.500 5.500A11 11 0 0 1 20.500 5.500z" fill="#e34133" /><path d="M11 0a11 11 0 0 1 9.500 5.500H11z" fill="#e34133" /><path d="M1.500 5.500A11 11 0 0 0 11 22l4.800-8.300L11 11z" fill="#31a350" /><path d="M15.800 13.700L11 22a11 11 0 0 0 9.500-16.500H11z" fill="#fcc934" /><circle cx="11" cy="11" r="5.200" fill="#fff" /><circle cx="11" cy="11" r="4" fill="#4285f4" /></svg>
        <T w={107} className="ml-[5px]">AS1 (1) - Jupyter N...</T>
      </Task>
      <Task m="ml-[9px]" w={152} pl={6}>
        <svg width="23" height="19" viewBox="0 0 23 19"><rect width="23" height="19" fill="#a8a8a8" /><rect x="1" y="3" width="21" height="15" fill="#0a0a0a" /><path d="M1 1.300h15" stroke="#e8e8e8" strokeWidth="1.400" /><text x="2.500" y="9" fontSize="6" fontFamily="Liberation Mono" fill="#eee">C:\_</text></svg>
        <T w={110} className="ml-[5px]">Командная строка...</T>
      </Task>
      <Task m="ml-[5px]" w={160} pl={10} active>
        <div className="relative flex h-[24px] w-[24px] items-center justify-center rounded-[4px] bg-[#16181c]">
          <WebexLogo w={21} h={16} />
          <i className="absolute bottom-0 right-0 flex h-[10px] w-[9px] items-center justify-center rounded-[2px] bg-white"><i className="h-[5px] w-[5px] bg-[#2ea36c]" /></i>
        </div>
        <T w={110} className="ml-[4px]">Cisco Webex Meeti...</T>
      </Task>
      <svg width="20" height="17" viewBox="0 0 20 17" className="ml-auto"><circle cx="6" cy="6" r="6" fill="#f7b42c" /><path d="M5 16.500a4.500 4.500 0 0 1-.5-9A5.500 5.500 0 0 1 14.500 7.300 4.700 4.700 0 0 1 15 16.500z" fill="#c9e4fa" /></svg>
      <T w={28} className="ml-[10px] text-[13px]">13°C</T>
      <T w={96} className="ml-[9px] text-[13px]">В осн. облачно</T>
      <Svg w={13} h={8} className="ml-[16px]" sw={1.300}><path d="M1 7l5.500-5.500L12 7" /></Svg>
      <svg width="11" height="17" viewBox="0 0 11 17" className="ml-[12px]" fill="none" stroke="#fff"><rect x="2" y=".5" width="7" height="11" rx="1.500" fill="#fff" /><path d="M.6 9v2.500c0 1.300.8 2 2 2h5.800c1.200 0 2-.7 2-2V9M5.500 13.500V16M3 16h5" /></svg>
      <Svg w={17} h={15} className="ml-[9px]"><path d="M6 2.500h10.500v8H5.500V7M11 10.500v3.500M7 14h8M.5.600h4v4h-4zM2.500 4.600V14H5" strokeLinejoin="miter" /></Svg>
      <Svg w={17} h={13} className="ml-[7px]"><path d="M1 4.500h2l3.500-3v10L3 8.500H1zM8.500 4.500c.9 1.200.9 2.800 0 4M10.800 3c1.600 2 1.600 5 0 7" /><path d="M13.200 1.500c2.300 3 2.300 7 0 10" opacity=".5" /></Svg>
      <T w={23} className="ml-[10px]">ENG</T>
      <div className="ml-[14px] flex w-[53px] flex-col items-center text-[11.500px] leading-[18px]"><T w={27}>11:09</T><T w={53}>21.10.2021</T></div>
      <div className="relative ml-[18px] mr-[19px] h-[18px] w-[17px]">
        <svg width="17" height="17" viewBox="0 0 17 17"><path d="M0 0h16v12H8l-3 3v-3H0z" fill="#fff" /><path d="M3 3.500h10M3 6h10M3 8.500h7" stroke="#1c2b2f" /></svg>
        <div className="absolute left-[8px] top-[8px] flex h-[16px] w-[16px] items-center justify-center rounded-full border border-[#9aa] bg-[#2d3436] text-[11px]">1</div>
      </div>
      <i className="mr-[4px] h-[40px] w-px bg-[#7a8588]" />
    </div>
  );
}

export default function App() {
  return (
    <div className="flex h-[1080px] w-[1920px] flex-col overflow-hidden bg-black font-['Noto_Sans','Open_Sans',sans-serif]">
      <TitleBar />
      <div className="flex h-[27px] items-center gap-[16px] pl-[8px] pt-[3px] text-[12px] leading-4 text-[#e0e0e0]">
        {MENU.map(([t, w]) => <T key={t} w={w}>{t}</T>)}
      </div>
      <Tiles />
      <div className="mt-[8px] flex h-[787px]">
        <div className="flex h-full w-[89px] shrink-0 border-l border-[#8a8a8a]" />
        <div className="flex w-[1259px] shrink-0 flex-col overflow-hidden bg-[#0b1128]">
          <MacMenuBar />
          <div className="flex flex-1 justify-between bg-linear-to-b from-[#08215a] via-[#0c1b40] via-40% to-[#0a0f22]">
            <PdfWindow />
            <ChromeWindow />
          </div>
        </div>
        <div className="ml-auto mr-px -mt-[8px]"><Participants /></div>
      </div>
      <Controls />
      <Taskbar />
    </div>
  );
}
